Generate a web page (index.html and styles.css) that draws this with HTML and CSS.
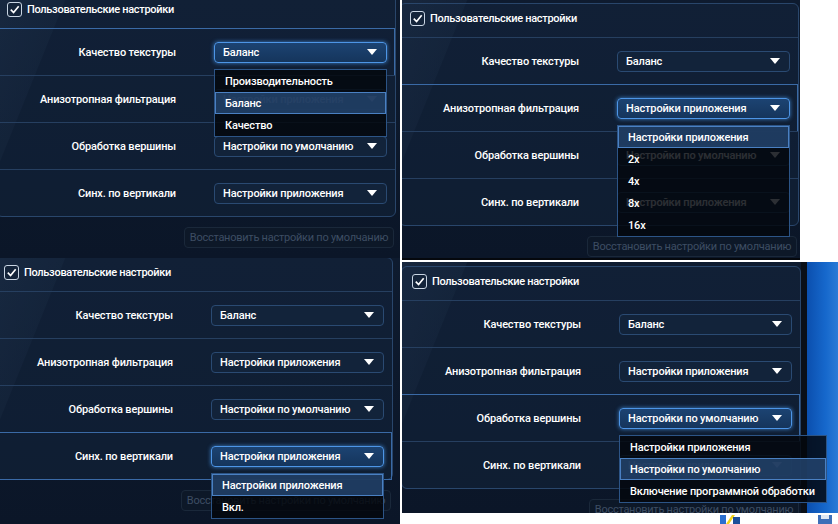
FILE: index.html
```html
<!DOCTYPE html>
<html lang="ru">
<head>
    <meta charset="UTF-8">
    <meta name="viewport" content="width=device-width, initial-scale=1.0">
    <title>Настройки 3D-приложений</title>
    <link rel="stylesheet" href="styles.css">
</head>
<body>
    <div class="collage">
        <div class="col">
            <!-- 1: качество текстуры -->
            <div class="shot shot-a">
                <div class="frame">
                    <div class="panel">
                        <div class="card">
                            <div class="card-head">
                                <span class="check"><svg viewBox="0 0 14 14"><path d="M3 7.2 L6 10.2 L11.5 3.5"/></svg></span>
                                <span>Пользовательские настройки</span>
                            </div>
                            <div class="row active">
                                <div class="label">Качество текстуры</div>
                                <div class="select open">Баланс<i class="arrow"></i>
                                    <ul class="list">
                                        <li>Производительность</li>
                                        <li class="sel">Баланс</li>
                                        <li>Качество</li>
                                    </ul>
                                </div>
                            </div>
                            <div class="row">
                                <div class="label">Анизотропная фильтрация</div>
                                <div class="select">Настройки приложения<i class="arrow"></i></div>
                            </div>
                            <div class="row">
                                <div class="label">Обработка вершины</div>
                                <div class="select">Настройки по умолчанию<i class="arrow"></i></div>
                            </div>
                            <div class="row">
                                <div class="label">Синх. по вертикали</div>
                                <div class="select">Настройки приложения<i class="arrow"></i></div>
                            </div>
                        </div>
                        <button class="reset" disabled>Восстановить настройки по умолчанию</button>
                    </div>
                </div>
            </div>

            <!-- 3: синхронизация -->
            <div class="shot shot-c">
                <div class="frame">
                    <div class="panel">
                        <div class="card">
                            <div class="card-head">
                                <span class="check"><svg viewBox="0 0 14 14"><path d="M3 7.2 L6 10.2 L11.5 3.5"/></svg></span>
                                <span>Пользовательские настройки</span>
                            </div>
                            <div class="row">
                                <div class="label">Качество текстуры</div>
                                <div class="select">Баланс<i class="arrow"></i></div>
                            </div>
                            <div class="row">
                                <div class="label">Анизотропная фильтрация</div>
                                <div class="select">Настройки приложения<i class="arrow"></i></div>
                            </div>
                            <div class="row">
                                <div class="label">Обработка вершины</div>
                                <div class="select">Настройки по умолчанию<i class="arrow"></i></div>
                            </div>
                            <div class="row active">
                                <div class="label">Синх. по вертикали</div>
                                <div class="select open">Настройки приложения<i class="arrow"></i>
                                    <ul class="list">
                                        <li class="sel">Настройки приложения</li>
                                        <li>Вкл.</li>
                                    </ul>
                                </div>
                            </div>
                        </div>
                        <button class="reset" disabled>Восстановить настройки по умолчанию</button>
                    </div>
                </div>
            </div>
        </div>

        <div class="col col-right">
            <!-- 2: анизотропная фильтрация -->
            <div class="shot shot-b">
                <div class="frame">
                    <div class="panel">
                        <div class="card">
                            <div class="card-head">
                                <span class="check"><svg viewBox="0 0 14 14"><path d="M3 7.2 L6 10.2 L11.5 3.5"/></svg></span>
                                <span>Пользовательские настройки</span>
                            </div>
                            <div class="row">
                                <div class="label">Качество текстуры</div>
                                <div class="select">Баланс<i class="arrow"></i></div>
                            </div>
                            <div class="row active">
                                <div class="label">Анизотропная фильтрация</div>
                                <div class="select open">Настройки приложения<i class="arrow"></i>
                                    <ul class="list">
                                        <li class="sel">Настройки приложения</li>
                                        <li>2x</li>
                                        <li>4x</li>
                                        <li>8x</li>
                                        <li>16x</li>
                                    </ul>
                                </div>
                            </div>
                            <div class="row">
                                <div class="label">Обработка вершины</div>
                                <div class="select">Настройки по умолчанию<i class="arrow"></i></div>
                            </div>
                            <div class="row">
                                <div class="label">Синх. по вертикали</div>
                                <div class="select">Настройки приложения<i class="arrow"></i></div>
                            </div>
                        </div>
                        <button class="reset" disabled>Восстановить настройки по умолчанию</button>
                    </div>
                </div>
                <div class="blank"></div>
            </div>

            <!-- 4: обработка вершины -->
            <div class="shot shot-d">
                <div class="top-area">
                    <div class="frame">
                        <div class="panel">
                            <div class="card">
                                <div class="card-head">
                                    <span class="check"><svg viewBox="0 0 14 14"><path d="M3 7.2 L6 10.2 L11.5 3.5"/></svg></span>
                                    <span>Пользовательские настройки</span>
                                </div>
                                <div class="row">
                                    <div class="label">Качество текстуры</div>
                                    <div class="select">Баланс<i class="arrow"></i></div>
                                </div>
                                <div class="row">
                                    <div class="label">Анизотропная фильтрация</div>
                                    <div class="select">Настройки приложения<i class="arrow"></i></div>
                                </div>
                                <div class="row active">
                                    <div class="label">Обработка вершины</div>
                                    <div class="select open">Настройки по умолчанию<i class="arrow"></i>
                                        <ul class="list">
                                            <li>Настройки приложения</li>
                                            <li class="sel">Настройки по умолчанию</li>
                                            <li>Включение программной обработки</li>
                                        </ul>
                                    </div>
                                </div>
                                <div class="row">
                                    <div class="label">Синх. по вертикали</div>
                                    <div class="select">Настройки приложения<i class="arrow"></i></div>
                                </div>
                            </div>
                            <button class="reset" disabled>Восстановить настройки по умолчанию</button>
                        </div>
                    </div>
                    <div class="desktop"></div>
                </div>
                <div class="taskbar">
                    <svg class="tray" width="20" height="11" viewBox="0 0 20 11">
                        <rect x="0" y="2" width="6" height="9" fill="#2a6fd0"/>
                        <path d="M6 11 L12 2 L15 2 L9 11 Z" fill="#f2d21a"/>
                        <rect x="13" y="4" width="7" height="7" fill="#1d4f9a"/>
                    </svg>
                    <svg class="tray tray-end" width="14" height="11" viewBox="0 0 14 11">
                        <rect x="0" y="2" width="14" height="9" fill="#3d6fb8"/>
                        <rect x="3" y="2" width="8" height="4" fill="#dfe8f4"/>
                    </svg>
                </div>
            </div>
        </div>
    </div>
</body>
</html>
```

FILE: styles.css
```css
* {
    box-sizing: border-box;
}

body {
    margin: 0;
    background: #ffffff;
    font-family: Roboto, 'Liberation Sans', sans-serif;
    color: #ffffff;
}

.collage {
    display: flex;
    width: 838px;
    height: 524px;
    overflow: hidden;
}

.col {
    display: flex;
    flex-direction: column;
    width: 400px;
}

.col-right {
    width: 438px;
    border-left: 2px solid #ffffff;
}

/* one screenshot */
.shot {
    position: relative;
    overflow: hidden;
    display: flex;
}

.shot-a { height: 258px; }
.shot-c { height: 266px; }
.shot-b { height: 262px; border-bottom: 2px solid #ffffff; }
.shot-d { height: 262px; flex-direction: column; }

.frame {
    flex: 1;
    background:
        linear-gradient(112deg, rgba(120, 160, 210, 0.09) 0, rgba(120, 160, 210, 0.05) 60px, transparent 61px),
        linear-gradient(180deg, #0e1b2f 0%, #0b1628 100%);
}

.shot-b .frame {
    flex: none;
    width: 398px;
    border-bottom: 2px solid #05080d;
}

.blank {
    flex: 1;
    background: #ffffff;
}

.top-area {
    display: flex;
    height: 251px;
}

.shot-d .frame {
    flex: none;
    width: 405px;
    border-right: 6px solid #0a0f17;
}

.desktop {
    flex: 1;
    background: linear-gradient(90deg, #0b4fae 0%, #1668cc 60%, #2a7ad6 100%);
}

.taskbar {
    height: 11px;
    background: #ffffff;
    display: flex;
    align-items: flex-end;
    padding-left: 318px;
}

.tray-end {
    margin-left: auto;
    margin-right: 6px;
}

/* settings panel */
.panel {
    display: flex;
    flex-direction: column;
    width: 400px;
}

.shot-a .panel { margin: -6px 0 0 -4px; }
.shot-b .panel { margin: 3px 0 0 -3px; }
.shot-c .panel { margin: -1px 0 0 -7px; }
.shot-d .panel { margin: 4px 0 0 -1px; }

.card {
    border: 1px solid #29466b;
    border-radius: 6px;
    background: rgba(22, 42, 70, 0.35);
}

.card-head {
    height: 33px;
    display: flex;
    align-items: flex-start;
    padding: 7px 0 0 10px;
    font-size: 11px;
    font-weight: 500;
    letter-spacing: -0.3px;
}

.check {
    width: 15px;
    height: 15px;
    border: 1px solid #c9d5e3;
    border-radius: 3px;
    background: #14243a;
    margin-right: 5px;
    display: flex;
}

.check svg {
    width: 13px;
    height: 13px;
    fill: none;
    stroke: #ffffff;
    stroke-width: 1.8;
}

.card-head span:last-child {
    line-height: 15px;
}

.row {
    height: 47px;
    border-top: 1px solid #263f60;
    display: grid;
    grid-template-columns: 179px 173px;
    column-gap: 38px;
    align-items: center;
    font-size: 11px;
    font-weight: 500;
    letter-spacing: -0.15px;
}

.row.active {
    border-top-color: #3a6aa6;
    box-shadow: 0 1px 0 #3a6aa6, inset -1px 0 0 #3a6aa6;
}

.label {
    text-align: right;
}

.select {
    position: relative;
    height: 21px;
    display: flex;
    align-items: center;
    justify-content: space-between;
    padding: 0 9px 0 8px;
    background: #12233a;
    border: 1px solid #2a4a72;
    border-radius: 4px;
    white-space: nowrap;
}

.select.open {
    background: linear-gradient(180deg, #1c4372 0%, #15355c 100%);
    border-color: #4d95e6;
    box-shadow: 0 0 4px rgba(70, 150, 235, 0.8);
}

.arrow {
    width: 0;
    height: 0;
    border-left: 5px solid transparent;
    border-right: 5px solid transparent;
    border-top: 6px solid #ffffff;
}

.list {
    position: absolute;
    z-index: 5;
    top: 26px;
    left: -1px;
    min-width: calc(100% + 2px);
    margin: 0;
    padding: 0;
    list-style: none;
    background: rgba(3, 7, 13, 0.84);
    border: 1px solid #2c5486;
}

.list li {
    height: 22px;
    line-height: 21px;
    padding: 0 10px 0 9px;
    border: 1px solid transparent;
}

.list li.sel {
    background: rgba(36, 70, 112, 0.82);
    border-color: #4a80c2;
}

.reset {
    align-self: flex-end;
    margin: 10px 2px 0 0;
    width: 210px;
    height: 21px;
    padding: 0;
    border: 1px solid #1a283a;
    border-radius: 4px;
    background: #0d1828;
    color: #3d4d63;
    font-family: Roboto, 'Liberation Sans', sans-serif;
    font-size: 11px;
    letter-spacing: -0.25px;
    white-space: nowrap;
}
```
